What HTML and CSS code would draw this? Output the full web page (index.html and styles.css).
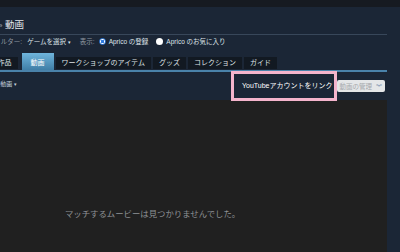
FILE: index.html
```html
<!DOCTYPE html>
<html lang="ja">
<head>
<meta charset="utf-8">
<link rel="stylesheet" href="styles.css">
</head>
<body>
<div class="topbar"></div>
<div class="main">
  <div class="title"><span class="crumb">»</span> 動画</div>
  <div class="rule"></div>
  <div class="filters">
    <span class="label first">フィルター:</span>
    <span class="select">ゲームを選択 <span class="caret">▾</span></span>
    <span class="label show">表示:</span>
    <span class="radio checked"></span>
    <span class="opt">Aprico の登録</span>
    <span class="radio"></span>
    <span class="opt">Aprico のお気に入り</span>
  </div>
  <div class="tabs">
    <div class="tab first">アート作品</div>
    <div class="tab active">動画</div>
    <div class="tab">ワークショップのアイテム</div>
    <div class="tab">グッズ</div>
    <div class="tab">コレクション</div>
    <div class="tab">ガイド</div>
  </div>
  <div class="subrow">
    <span class="subfilter">すべての動画 <span class="caret">▾</span></span>
    <div class="actions">
      <div class="yt">
        <span class="yt-text">YouTubeアカウントをリンク</span>
        <span class="highlight"></span>
      </div>
      <div class="manage"><span>動画の管理</span><span class="chev">︾</span></div>
    </div>
  </div>
  <div class="panel">
    <div class="empty">マッチするムービーは見つかりませんでした。</div>
  </div>
</div>
</body>
</html>
```
FILE: styles.css
```css
html, body {
  margin: 0;
  padding: 0;
}
body {
  width: 400px;
  height: 252px;
  overflow: hidden;
  background: #1b2636;
  font-family: "Liberation Sans", "Noto Sans CJK JP", sans-serif;
  color: #c6d4df;
}
.topbar {
  height: 7px;
  background: #161a21;
}
.main {
  width: 387px;
  display: flex;
  flex-direction: column;
  height: 245px;
}
.title {
  margin-top: 11px;
  height: 14px;
  line-height: 14px;
  font-size: 9.5px;
  color: #e6e9ec;
  white-space: nowrap;
}
.crumb {
  margin-left: -2px;
  font-size: 8px;
  color: #9aa4ae;
}
.rule {
  margin-top: 2px;
  height: 1px;
  background: #38475a;
}
.filters {
  display: flex;
  align-items: center;
  height: 12px;
  font-size: 6.5px;
  white-space: nowrap;
}
.label {
  color: #8f98a0;
}
.label.first {
  margin-left: -12px;
}
.select {
  margin-left: 5px;
  color: #dfe5ea;
}
.caret {
  font-size: 5px;
}
.label.show {
  margin-left: 9px;
}
.radio {
  flex: none;
  box-sizing: border-box;
  width: 7px;
  height: 7px;
  border-radius: 50%;
  background: #ffffff;
  margin-left: 4px;
  margin-right: 3px;
}
.radio.checked {
  border: 1px solid #2f7ce0;
  background: radial-gradient(circle, #2f7ce0 0 1.4px, #ffffff 1.9px);
}
.opt + .radio {
  margin-left: 8px;
}
.opt {
  color: #dfe5ea;
}
.tabs {
  margin-top: 6px;
  display: flex;
  align-items: flex-end;
  gap: 2px;
  border-bottom: 2px solid #4a82aa;
  white-space: nowrap;
}
.tab {
  font-size: 7px;
  line-height: 12px;
  padding: 0 6px;
  margin-bottom: 1px;
  background: #121922;
  color: #dfe3e6;
}
.tab.first {
  margin-left: -29px;
  margin-right: 2px;
}
.tab.active {
  margin-bottom: 0;
  padding: 4px 9px 1px;
  background: linear-gradient(to bottom, #6fb5dc, #3f7ea6);
  color: #ffffff;
}
.subrow {
  height: 28px;
  display: flex;
  justify-content: space-between;
  align-items: flex-start;
  white-space: nowrap;
}
.subfilter {
  margin-top: 7px;
  margin-left: -23px;
  font-size: 6px;
  line-height: 10px;
  color: #c6d4df;
}
.actions {
  display: flex;
  align-items: flex-start;
  margin-right: 2px;
}
.yt {
  position: relative;
  margin-top: 8px;
  font-size: 7px;
  line-height: 12px;
  color: #ffffff;
  margin-right: 5px;
}
.highlight {
  position: absolute;
  left: -11px;
  right: -5px;
  top: -9px;
  bottom: -9px;
  border: 3px solid #f4b4cc;
}
.manage {
  margin-top: 8px;
  height: 12px;
  display: flex;
  align-items: center;
  gap: 4px;
  padding: 0 3px 0 2px;
  background: #e4e6e8;
  border-radius: 2px;
  font-size: 6.5px;
  color: #a4a8ac;
}
.chev {
  font-size: 6px;
  color: #4f6f96;
}
.panel {
  flex: 1;
  background: #202020;
}
.empty {
  padding-top: 108px;
  padding-left: 65px;
  font-size: 8.4px;
  line-height: 12px;
  color: #8e9296;
  white-space: nowrap;
}
```
